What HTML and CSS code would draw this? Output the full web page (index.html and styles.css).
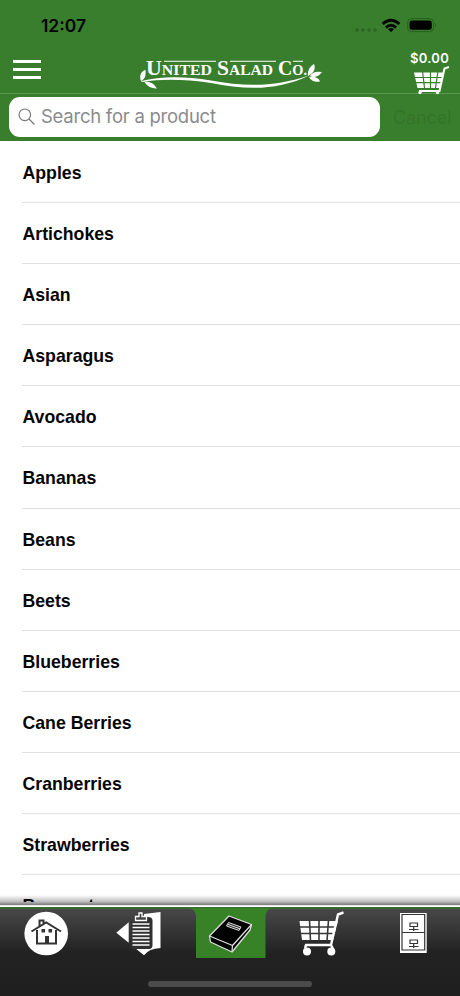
FILE: index.html
```html
<!DOCTYPE html>
<html lang="en">
<head>
<meta charset="utf-8">
<title>United Salad Co.</title>
<link rel="stylesheet" href="styles.css">
</head>
<body>
<div class="app">
  <header class="header">
    <div class="status">
      <svg class="clock" width="60" height="24" viewBox="0 0 60 24"><text x="1" y="17.5" textLength="45" lengthAdjust="spacingAndGlyphs">12:07</text></svg>
      <svg class="signals" width="84" height="20" viewBox="0 0 84 20">
        <g fill="#2d6425"><circle cx="3" cy="14" r="1.8"/><circle cx="9" cy="14" r="1.8"/><circle cx="15" cy="14" r="1.8"/><circle cx="21" cy="14" r="1.8"/></g>
        <g fill="none" stroke="#000" stroke-width="2.8"><path d="M28.700 8Q37 0.500 45.300 8"/><path d="M32 11.600Q37 7 42 11.600"/></g>
        <path d="M34.200 13.200Q37 11 39.800 13.200L37 16.200Z"/>
        <rect x="53.600" y="2.600" width="26" height="13" rx="4" fill="none" stroke="#286020"/><rect x="55.500" y="4.500" width="22.300" height="9.300" rx="2.400"/><path d="M81 7q2 2 0 4z" fill="#286020"/>
      </svg>
    </div>
    <div class="navbar">
      <div class="menu"><i></i><i></i><i></i></div>
      <svg class="logo" width="184" height="36" viewBox="0 0 184 36">
        <g fill="#fff" class="brand">
          <text x="7" y="22" textLength="66" lengthAdjust="spacingAndGlyphs"><tspan class="cap">U</tspan>NITED</text>
          <text x="78" y="22" textLength="56" lengthAdjust="spacingAndGlyphs"><tspan class="cap">S</tspan>ALAD</text>
          <text x="139" y="22" textLength="29" lengthAdjust="spacingAndGlyphs"><tspan class="cap">C</tspan>O.</text>
          <path d="M25 7.800H77v1H25zM91 7.800H137v1H91zM154 7.800h10v1h-10z"/>
          <path d="M2 28C22 23 45 23 72 27.500C107 34 137 34 171 22C139 38 107 37 72 30C45 26 22 26 3 29Z"/>
          <path d="M2 28C0 23 2 18 6.500 17C7 23 6 26 2 28ZM5 28.500Q14 28 18 35.500Q10 36 5 28.500ZM169 23Q168 15 175 11Q178 18 169 23ZM171 23Q174 17.500 183 19Q178 26 171 23ZM170 24Q179 23 181 28.500Q173 30 170 24Z"/>
        </g>
      </svg>
      <div class="basket">
        <span>$0.00</span>
        <svg width="38" height="30" viewBox="0 0 38 30"><path fill="#fff" d="M1 6.500H30L27 22H4.500Z"/><path d="M9.500 5L11.500 22M17.500 5V22M25 5L22.500 22M1 11.500H31M1 16.700H31" stroke="#387e2c" stroke-width="1.200"/><path d="M36 1L31.500 2.500L26.500 25H6" fill="none" stroke="#fff" stroke-width="2"/><circle cx="7" cy="26.500" r="1.700" fill="#fff"/><circle cx="24.500" cy="26.500" r="1.700" fill="#fff"/></svg>
      </div>
    </div>
    <div class="searchbar">
      <div class="field">
        <svg width="18" height="18" viewBox="0 0 18 18" fill="none" stroke="#77787a" stroke-width="1.2"><circle cx="6.8" cy="6.8" r="5.8"/><path d="M11 11L16.5 16.5"/></svg>
        <span class="placeholder">Search for a product</span>
      </div>
      <span class="cancel">Cancel</span>
    </div>
  </header>
  <main class="list">
    <div class="row">Apples</div>
    <div class="row">Artichokes</div>
    <div class="row">Asian</div>
    <div class="row">Asparagus</div>
    <div class="row">Avocado</div>
    <div class="row">Bananas</div>
    <div class="row">Beans</div>
    <div class="row">Beets</div>
    <div class="row">Blueberries</div>
    <div class="row">Cane Berries</div>
    <div class="row">Cranberries</div>
    <div class="row">Strawberries</div>
    <div class="row">Bouquet</div>
  </main>
  <footer class="tabs">
    <div class="tab"><svg width="92" height="50" viewBox="0 0 92 50"><circle cx="46.200" cy="25.500" r="21.800" fill="#fff"/><g fill="none" stroke="#343434" stroke-width="2"><path d="M31.500 23.500L46.200 14.500L61 23.500M37 22V35.500H56V22M39.500 18V12.500H43.500V16"/></g><path fill="#343434" d="M41.500 21h3.600v3.600h-3.600zM48.500 21h3.600v3.600h-3.600zM45 28h4v8h-4z"/></svg></div>
    <div class="tab"><svg width="92" height="50" viewBox="0 0 92 50"><path fill="#fff" d="M24.300 24.700L36.700 14.300V34.700ZM52 6L68.500 4V40Q57 40.500 52 47.300L43 40H59V10H52Z"/><path d="M39 13.500V39Q39 41 42 41H57Q60.500 41 60.500 37V12Q60 9 56 9H55V13Z" fill="#303030"/><path d="M43.500 12.500V8.500H47V5H50V8.500H54.500V12.500Z" fill="#454545" stroke="#fff" stroke-width="1.300"/><path d="M40.500 16H57.500M40.500 19.500H57.500M40.500 23H57.500M40.500 26.500H57.500M40.500 30H57.500M40.500 33.500H57.500M40.500 37H57.500" stroke="#fff" stroke-width="1.300"/></svg></div>
    <div class="tab"><svg width="92" height="50" viewBox="0 0 92 50"><path fill="#378127" d="M5 0H88Q82 1 81.500 8V50H12V8Q11 1 5 0Z"/><g stroke="#ddd" stroke-width="1.300" stroke-linejoin="round"><path fill="#000" d="M25.500 28L45 8L67.500 16.500L66 22L48 44L26.500 34Z"/><path fill="none" d="M25.500 28L48.500 37.500L67.500 16.500M48.500 37.500L48 43"/><path fill="#333" stroke-width="1" d="M44.500 14.500L57 19L55 22.500L42.500 18ZM43.500 16.300L56 20.800"/></g></svg></div>
    <div class="tab"><svg width="92" height="50" viewBox="0 0 92 50"><path fill="#fff" d="M23.500 13H62L57 32H26Z"/><path d="M33.500 12L34.500 33M43 12V33M52.500 12L51 33M23 19H64M24 25.500H64" stroke="#373737" stroke-width="1.600"/><path d="M67.500 4.500L62 6.500L55 37H30L29 40M55 37L57 41" fill="none" stroke="#fff" stroke-width="2.400"/><circle cx="31" cy="43.500" r="4" fill="#fff"/><circle cx="55.300" cy="43.500" r="4" fill="#fff"/></svg></div>
    <div class="tab"><svg width="92" height="50" viewBox="0 0 92 50"><path fill="#fff" d="M32 5H58.700V45H32Z"/><g fill="none" stroke="#343434" stroke-width="1.200"><path d="M34 6.500H56.700V42H34ZM34 24.500H57M42 15H49.500V18.500H42ZM41 21.500H50.500M45.700 18.500V23M42 32H49.500V35.500H42ZM41 38.500H50.500M45.700 35.500V40"/></g></svg></div>
    <div class="home-indicator"></div>
  </footer>
</div>
</body>
</html>
```

FILE: styles.css
```css
* { box-sizing: border-box; }
body { margin: 0; background: #fff; font-family: Inter, "Liberation Sans", sans-serif; }
svg { display: block; flex-shrink: 0; }
.app { position: relative; width: 460px; height: 996px; overflow: hidden; display: flex; flex-direction: column; }
.header { background: #387e2c; height: 141px; flex-shrink: 0; }
.status { height: 47px; padding: 14px 22px 0 40px; display: flex; justify-content: space-between; }
.clock { font: 600 17px Inter, sans-serif; }
.signals { margin-top: 2px; }
.navbar { height: 47px; padding: 0 8px 0 13px; display: flex; border-bottom: 1px solid #5a9550; }
.menu { width: 28px; padding-top: 13px; display: flex; flex-direction: column; gap: 5px; }
.menu i { height: 3px; background: #fff; }
.logo { margin: 6px 0 0 98px; }
.brand { font: 700 14.5px "Liberation Serif", serif; }
.cap { font-size: 20px; }
.basket { width: 42px; margin: 3px 0 0 auto; color: #fff; font: 600 13px/16px Inter, sans-serif; letter-spacing: .3px; }
.basket svg { margin: 0 0 0 3px; }
.searchbar { height: 47px; padding: 3px 0 4px 9px; display: flex; align-items: center; }
.field { width: 371px; height: 40px; padding-left: 9px; border-radius: 11px; background: #fff; display: flex; align-items: center; gap: 5px; flex-shrink: 0; }
.placeholder { margin-bottom: 2px; font: 18.5px/30px Inter, sans-serif; letter-spacing: -.25px; color: #8a8a8e; white-space: nowrap; }
.cancel { margin-left: 13px; font-size: 18px; letter-spacing: -.1px; color: #347429; }
.list { height: 766px; flex-shrink: 0; padding: 1px 0 0 22px; overflow: hidden; }
.row { height: 61.1px; padding-left: .5px; border-bottom: 1px solid #e1e1e2; font: 700 17.7px/62.5px "Liberation Sans", sans-serif; color: #050505; }
.tabs { position: relative; height: 89px; display: flex; border-top: 2px solid #376b31; background: linear-gradient(#484848, #222 50%, #1f1f1f); }
.tabs::before { content: ""; position: absolute; left: 0; right: 0; top: -14px; height: 12px; background: linear-gradient(#0000, #0004 58%, #b4b4b4 58%, #777 85%, #fff 88%); }
.tab { width: 92px; margin-top: -1px; }
.home-indicator { position: absolute; left: 148px; top: 72px; width: 164px; height: 6px; border-radius: 3px; background: #4b4b4b; }
```
